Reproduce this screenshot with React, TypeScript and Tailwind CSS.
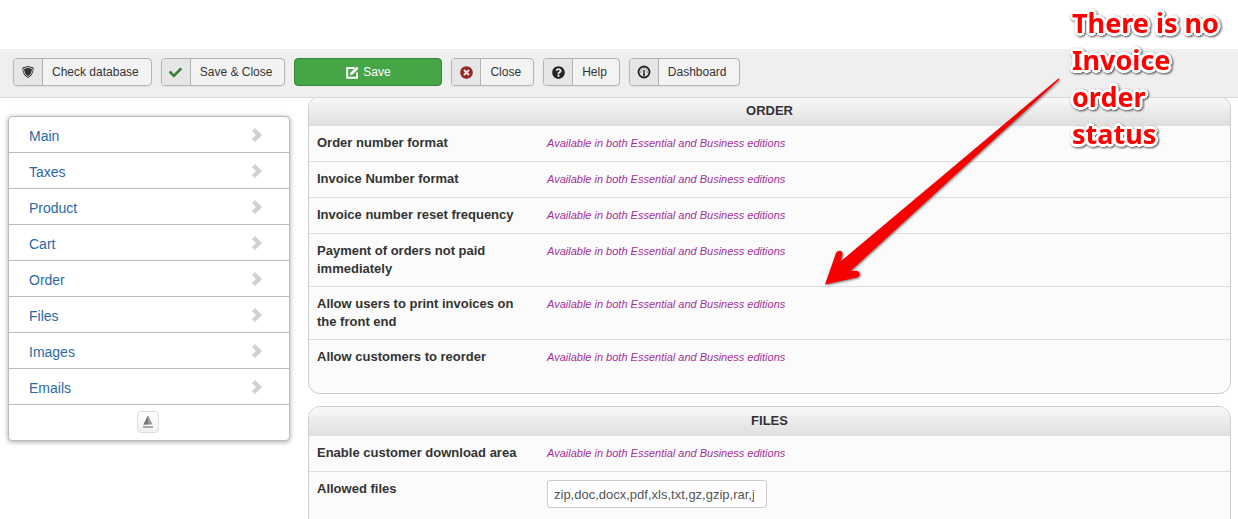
import type { ReactNode } from 'react';
import { FaCheck, FaQuestionCircle, FaTimesCircle } from 'react-icons/fa';

const sections = ['Main', 'Taxes', 'Product', 'Cart', 'Order', 'Files', 'Images', 'Emails'];

const orderOptions = [
  'Order number format',
  'Invoice Number format',
  'Invoice number reset frequency',
  'Payment of orders not paid immediately',
  'Allow users to print invoices on the front end',
  'Allow customers to reorder',
];

function ShieldIcon() {
  return (
    <svg viewBox="0 0 12 12" className="h-3 w-3">
      <path d="M6 0 11.600 1.500C11.700 6 10.200 9.800 6 12 1.800 9.800.3 6 .4 1.500Z" fill="#333" />
      <path d="M6 1.400 10.400 2.600C10.300 6 9 8.900 6 10.600 3 8.900 1.700 6 1.600 2.600Z" fill="none" stroke="#e6e6e6" strokeWidth=".8" />
    </svg>
  );
}

function DashboardIcon() {
  return (
    <svg viewBox="0 0 14 14" className="h-3.5 w-3.5" fill="none" stroke="#222">
      <circle cx="7" cy="7" r="5.500" strokeWidth="1.800" />
      <path d="M7 5V10" strokeWidth="1.400" />
      <path d="M6 10h2" strokeWidth="1.600" />
      <path d="M3.300 7h1M9.700 7h1M4.500 4.400l.8.8M9.500 4.400l-.8.8M7 2.800v.9" strokeWidth="1" />
    </svg>
  );
}

function EditIcon() {
  return (
    <svg viewBox="0 0 13 13" className="h-3.25 w-3.25" fill="none">
      <path d="M8.500 2H1.200v9.800h9.800V6.500" stroke="#fff" strokeWidth="2" />
      <path d="M3.800 9.300 4.600 6.500 10.200.9a.7.700 0 0 1 1 0l1 1a.7.700 0 0 1 0 1L6.600 8.500Z" fill="#fff" />
    </svg>
  );
}

function Chevron() {
  return (
    <svg viewBox="0 0 10 14" className="h-3.5 w-2.5">
      <path d="M0 3 3 0 10 7 3 14 0 11 4 7Z" fill="#d0d0d0" />
    </svg>
  );
}

function ToolbarButton({ icon, children }: { icon: ReactNode; children: ReactNode }) {
  return (
    <button
      type="button"
      className="flex h-7 items-center overflow-hidden rounded border border-[#b3b3b3] bg-[#f3f3f3] text-[12px] whitespace-nowrap text-[#333] shadow-[0_1px_2px_rgba(0,0,0,0.05)]"
    >
      <span className="flex h-full w-[29px] items-center justify-center border-r border-[#b3b3b3] bg-[#e6e6e6]">
        {icon}
      </span>
      <span className="pr-3 pl-[9px]">{children}</span>
    </button>
  );
}

function Panel({ title, children }: { title: string; children: ReactNode }) {
  return (
    <section className="overflow-hidden rounded-xl border border-[#ccc] bg-[#fbfbfb]">
      <h2 className="flex h-[29px] items-center justify-center bg-linear-to-b from-[#f9f9f9] to-[#dedede] pb-0.5 text-[13px] font-bold">
        {title}
      </h2>
      <div className="divide-y divide-[#ddd]">{children}</div>
    </section>
  );
}

function EditionNote() {
  return (
    <span className="text-[11px] leading-[19px] text-[#a32f9c] italic">
      Available in both Essential and Business editions
    </span>
  );
}

function OptionRow({ label, children }: { label: ReactNode; children: ReactNode }) {
  return (
    <div className="flex px-2 pt-2 pb-2 last:pb-[26px]">
      <div className="w-[230px] shrink-0 pr-4 text-[13px] leading-[18px] font-bold">{label}</div>
      <div className="flex items-start">{children}</div>
    </div>
  );
}

function Callout() {
  return (
    <>
      <svg
        viewBox="820 74 244 216"
        className="pointer-events-none absolute top-[74px] right-[174px] z-20 h-[216px] w-[244px] drop-shadow-[1px_1px_1px_rgba(0,0,0,0.5)]"
      >
        <path
          d="M1058.500 78.500 1059.500 79.500 850.500 271 856.500 270.800Q860.500 272 859.500 275.500 858.500 277.500 856 277.700L825 284.500 836 253Q838 249.800 841.500 251.200 842.800 252.500 842.300 255L840.500 261.500Z"
          fill="#f80000"
        />
      </svg>
      <p className="absolute top-1 right-[6px] z-20 w-40 font-['Noto_Sans',sans-serif] text-[27px] leading-[37px] font-bold text-[#f00] [text-shadow:2px_0_#fff,-2px_0_#fff,0_2px_#fff,0_-2px_#fff,2px_2px_#fff,-2px_2px_#fff,2px_-2px_#fff,-2px_-2px_#fff,3px_0_#fff,-3px_0_#fff,0_3px_#fff,0_-3px_#fff] drop-shadow-[1px_1px_1px_rgba(0,0,0,0.7)]">
        There is no Invoice order status
      </p>
    </>
  );
}

export default function App() {
  return (
    <div className="relative flex h-screen flex-col overflow-hidden bg-white pt-[49px] font-['Liberation_Sans',Arial,sans-serif] text-[#333]">
      <header className="relative z-10 flex shrink-0 gap-[9px] border-b border-[#d8d8d8] bg-[#efefef] px-[13px] pt-[9px] pb-[11px]">
        <ToolbarButton icon={<ShieldIcon />}>Check database</ToolbarButton>
        <ToolbarButton icon={<FaCheck className="h-3.25 w-3.25 text-[#378137]" />}>Save &amp; Close</ToolbarButton>
        <button
          type="button"
          className="flex h-7 w-[148px] items-center justify-center gap-1 rounded border border-[#398439] bg-[#46a546] text-[12px] text-white"
        >
          <EditIcon />
          Save
        </button>
        <ToolbarButton icon={<FaTimesCircle className="h-3.25 w-3.25 text-[#942a25]" />}>Close</ToolbarButton>
        <ToolbarButton icon={<FaQuestionCircle className="h-3.25 w-3.25 text-[#222]" />}>Help</ToolbarButton>
        <ToolbarButton icon={<DashboardIcon />}>Dashboard</ToolbarButton>
      </header>

      <div className="flex items-start gap-[18px] pr-[7px] pl-2">
        <nav className="mt-[18px] w-[282px] shrink-0 rounded border border-[#bbb] bg-white text-[14px] shadow-[0_1px_5px_rgba(0,0,0,0.35)]">
          {sections.map((name) => (
            <a
              key={name}
              href={`#${name.toLowerCase()}`}
              className="flex h-9 items-center justify-between border-b border-[#bbb] pr-[27px] pl-5 text-[#2a69a8]"
            >
              <span className="pt-1">{name}</span>
              <Chevron />
            </a>
          ))}
          <div className="flex h-[35px] items-center justify-center pr-0.5 pb-0.5">
            <button
              type="button"
              aria-label="Back to top"
              className="flex h-[22px] w-[22px] items-center justify-center rounded-sm border border-[#ddd] bg-linear-to-b from-white to-[#f0f0f0]"
            >
              <svg viewBox="0 0 12 14" className="h-3.5 w-3">
                <path d="M6 .5 10.500 9.500h-9Z" fill="#999" />
                <path d="M6 .5V9.500H1.500Z" fill="#777" />
                <path d="M1 11h10v2H1Z" fill="#aaa" />
              </svg>
            </button>
          </div>
        </nav>

        <main className="-mt-0.5 flex min-w-0 flex-1 flex-col gap-3">
          <Panel title="ORDER">
            {orderOptions.map((label) => (
              <OptionRow key={label} label={label}>
                <EditionNote />
              </OptionRow>
            ))}
          </Panel>
          <Panel title="FILES">
            <OptionRow label="Enable customer download area">
              <EditionNote />
            </OptionRow>
            <OptionRow label={<label htmlFor="allowed-files">Allowed files</label>}>
              <input
                id="allowed-files"
                type="text"
                defaultValue="zip,doc,docx,pdf,xls,txt,gz,gzip,rar,jpg,jpeg,png"
                className="h-7 w-[220px] rounded-[3px] border border-[#ccc] bg-white pr-3 pl-1.5 text-[13px] text-[#555]"
              />
            </OptionRow>
          </Panel>
        </main>
      </div>

      <Callout />
    </div>
  );
}
